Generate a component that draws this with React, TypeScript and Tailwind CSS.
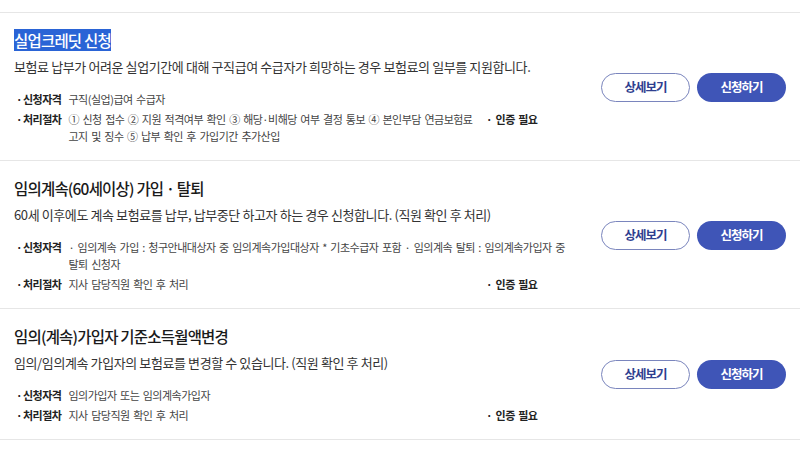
import React from "react";

type Item = {
  title: string;
  selected?: boolean;
  desc: string;
  qual: string[];
  proc: string[];
};

const items: Item[] = [
  {
    title: "실업크레딧 신청",
    selected: true,
    desc: "보험료 납부가 어려운 실업기간에 대해 구직급여 수급자가 희망하는 경우 보험료의 일부를 지원합니다.",
    qual: ["구직(실업)급여 수급자"],
    proc: [
      "① 신청 접수 ② 지원 적격여부 확인 ③ 해당·비해당 여부 결정 통보 ④ 본인부담 연금보험료",
      "고지 및 징수 ⑤ 납부 확인 후 가입기간 추가산입",
    ],
  },
  {
    title: "임의계속(60세이상) 가입 · 탈퇴",
    desc: "60세 이후에도 계속 보험료를 납부, 납부중단 하고자 하는 경우 신청합니다. (직원 확인 후 처리)",
    qual: [
      "· 임의계속 가입 : 청구안내대상자 중 임의계속가입대상자 * 기초수급자 포함 · 임의계속 탈퇴 : 임의계속가입자 중",
      "탈퇴 신청자",
    ],
    proc: ["지사 담당직원 확인 후 처리"],
  },
  {
    title: "임의(계속)가입자 기준소득월액변경",
    desc: "임의/임의계속 가입자의 보험료를 변경할 수 있습니다. (직원 확인 후 처리)",
    qual: ["임의가입자 또는 임의계속가입자"],
    proc: ["지사 담당직원 확인 후 처리"],
  },
];

function Row({ label, lines }: { label: string; lines: string[] }) {
  return (
    <div className="flex">
      <span className="w-[9px] shrink-0 pl-[2px] font-bold text-[#222]">·</span>
      <span className="shrink-0 font-bold text-[#222]">{label}</span>
      <div className="ml-[7px] flex-1 text-[#444]">
        {lines.map((l, i) => (
          <div key={i} className="whitespace-nowrap">
            {l}
          </div>
        ))}
      </div>
    </div>
  );
}

export default function App() {
  return (
    <div
      className="min-h-[450px] w-[800px] bg-white pt-[12px]"
      style={{ fontFamily: '"Noto Sans CJK KR", "Noto Sans", sans-serif' }}
    >
      <div className="border-t border-[#e6e6e6]">
        {items.map((it, i) => (
          <div
            key={i}
            className="flex items-center border-b border-[#e6e6e6] pl-[14px] pr-[14px] pt-[16px] pb-[15px]"
          >
            <div className="min-w-0 flex-1">
              <div className="text-[15.5px] font-medium leading-[22px] tracking-[-0.8px] text-[#1a1a1a]">
                {it.selected ? (
                  <span className="bg-[#2a64d6] text-white">{it.title}</span>
                ) : (
                  it.title
                )}
              </div>
              <div className="mt-[6px] text-[13px] leading-[20px] tracking-[-0.4px] text-[#333]">
                {it.desc}
              </div>
              <div className="mt-[14px] flex flex-col gap-[3px] text-[11px] leading-[17px] tracking-[-0.5px] [word-spacing:1.5px]">
                <Row label="신청자격" lines={it.qual} />
                <div className="flex">
                  <div className="w-[464px] shrink-0">
                    <Row label="처리절차" lines={it.proc} />
                  </div>
                  <div className="ml-[8px] font-bold text-[#222]">· 인증 필요</div>
                </div>
              </div>
            </div>
            <div className="ml-[13px] flex shrink-0 gap-[7px]">
              <button className="h-[29px] w-[89px] rounded-full border border-[#7a85bd] bg-white text-[12.5px] font-bold tracking-[-1px] text-[#2f3f90]">
                상세보기
              </button>
              <button className="h-[29px] w-[89px] rounded-full bg-[#3f55b7] text-[12.5px] font-bold tracking-[-1px] text-white">
                신청하기
              </button>
            </div>
          </div>
        ))}
      </div>
    </div>
  );
}
